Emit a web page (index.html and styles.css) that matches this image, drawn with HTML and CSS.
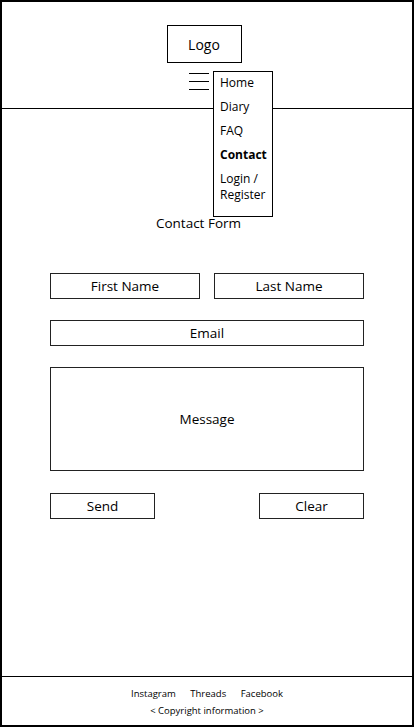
FILE: index.html
```html
<!DOCTYPE html>
<html lang="en">
<head>
    <meta charset="UTF-8">
    <meta name="viewport" content="width=device-width, initial-scale=1.0">
    <title>Contact</title>
    <link rel="stylesheet" href="styles.css">
</head>
<body>

<div class="page">
    <header class="header">
        <div class="logo">Logo</div>
        <nav class="nav">
            <div class="burger">
                <span></span>
                <span></span>
                <span></span>
            </div>
            <ul class="menu">
                <li>Home</li>
                <li>Diary</li>
                <li>FAQ</li>
                <li class="active">Contact</li>
                <li>Login / Register</li>
            </ul>
        </nav>
    </header>

    <main class="main">
        <h1 class="title">Contact Form</h1>
        <form class="contact-form" id="contactForm">
            <div class="row">
                <input type="text" class="field" placeholder="First Name">
                <input type="text" class="field" placeholder="Last Name">
            </div>
            <input type="email" class="field" placeholder="Email">
            <textarea class="field message" placeholder="Message"></textarea>
            <div class="row buttons">
                <button type="submit">Send</button>
                <button type="reset">Clear</button>
            </div>
        </form>
    </main>

    <footer class="footer">
        <div class="social">
            <span>Instagram</span>
            <span>Threads</span>
            <span>Facebook</span>
        </div>
        <div class="copyright">&lt; Copyright information &gt;</div>
    </footer>
</div>

</body>
</html>
```

FILE: styles.css
```css
* {
    box-sizing: border-box;
}
body {
    margin: 0;
    font-family: "Open Sans", Arial, sans-serif;
    color: #000;
    background-color: #fff;
}
.page {
    height: 727px;
    border: 2px solid #000;
    display: flex;
    flex-direction: column;
}
.header {
    height: 107px;
    border-bottom: 1px solid #000;
    display: flex;
    flex-direction: column;
    align-items: center;
    padding-top: 23px;
}
.logo {
    width: 75px;
    height: 38px;
    margin-right: 6px;
    border: 1px solid #000;
    display: flex;
    align-items: center;
    justify-content: center;
    font-size: 14px;
}
.nav {
    position: relative;
    width: 20px;
    margin-top: 10px;
    margin-right: 16px;
}
.burger span {
    display: block;
    height: 1px;
    background-color: #000;
    margin-bottom: 7px;
}
.menu {
    position: absolute;
    top: -2px;
    left: 24px;
    width: 60px;
    margin: 0;
    padding: 3px 6px 13px;
    list-style: none;
    background-color: #fff;
    border: 1px solid #000;
    font-size: 12px;
    line-height: 16px;
    z-index: 2;
}
.menu li {
    margin-bottom: 8px;
}
.menu li:last-child {
    margin-bottom: 0;
}
.menu .active {
    font-weight: bold;
}
.main {
    flex: 1;
}
.title {
    margin: 105px 17px 0 0;
    font-size: 13.5px;
    font-weight: normal;
    line-height: 19px;
    text-align: center;
}
.contact-form {
    width: 314px;
    margin: 40px auto 0;
    display: flex;
    flex-direction: column;
    gap: 21px;
}
.row {
    display: flex;
    justify-content: space-between;
}
.field {
    display: block;
    width: 100%;
    height: 26px;
    padding: 0;
    border: 1px solid #222;
    border-radius: 0;
    font-family: inherit;
    font-size: 13.5px;
    text-align: center;
    color: #000;
    background-color: #fff;
    outline: none;
}
.row .field {
    width: 150px;
}
.field::placeholder {
    color: #000;
    opacity: 1;
}
.message {
    height: 104px;
    padding-top: 41px;
    line-height: 20px;
    resize: none;
}
.buttons {
    margin-top: 1px;
}
.buttons button {
    width: 105px;
    height: 26px;
    padding: 0;
    border: 1px solid #222;
    background-color: #fff;
    font-family: inherit;
    font-size: 13.5px;
    color: #000;
    cursor: pointer;
}
.footer {
    border-top: 1px solid #000;
    padding-top: 8px;
    height: 49px;
    text-align: center;
    font-size: 9.5px;
    line-height: 17px;
}
.social span {
    margin: 0 6px;
}
```
